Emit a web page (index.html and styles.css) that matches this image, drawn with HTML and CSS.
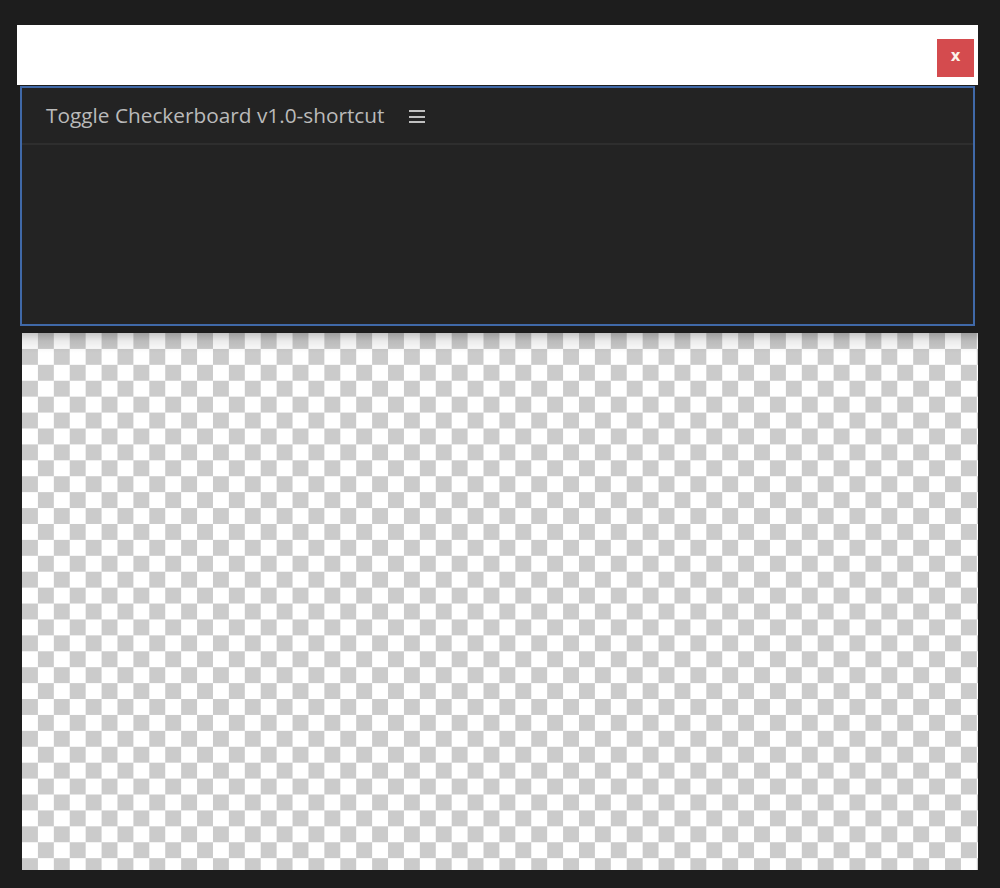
FILE: index.html
```html
<!DOCTYPE html>
<html lang="en">
<head>
<meta charset="utf-8">
<title>Toggle Checkerboard</title>
<link rel="stylesheet" href="styles.css">
</head>
<body>
<div class="screen">
  <div class="window">
    <div class="titlebar">
      <button class="close" type="button" aria-label="Close">x</button>
    </div>
    <section class="panel">
      <header class="panel-head">
        <span class="panel-title">Toggle Checkerboard v1.0-shortcut</span>
        <span class="menu" aria-hidden="true"><i></i><i></i><i></i></span>
      </header>
      <div class="panel-body"></div>
    </section>
    <div class="canvas"></div>
  </div>
</div>
</body>
</html>
```

FILE: styles.css
```css
html, body {
  margin: 0;
  padding: 0;
  background: #1b1b1b;
}

.screen {
  width: 1000px;
  height: 888px;
  box-sizing: border-box;
  padding: 25px 22px 18px 17px;
  background: #1d1d1d;
  font-family: "Open Sans", "Noto Sans", sans-serif;
}

.window {
  display: flex;
  flex-direction: column;
  height: 100%;
}

.titlebar {
  height: 60px;
  background: #ffffff;
  display: flex;
  justify-content: flex-end;
  align-items: flex-start;
  padding: 14px 4px 0 0;
  box-sizing: border-box;
  flex-shrink: 0;
}

.close {
  width: 37px;
  height: 38px;
  border: 0;
  padding: 0 0 3px 0;
  background: #d44b4e;
  color: #fbf3ea;
  font-family: "DejaVu Sans", sans-serif;
  font-size: 15px;
  font-weight: bold;
  line-height: 1;
  display: flex;
  align-items: center;
  justify-content: center;
}

.panel {
  margin: 1px 3px 0 3px;
  height: 240px;
  box-sizing: border-box;
  border: 2px solid #4069a8;
  background: #232323;
  display: flex;
  flex-direction: column;
  flex-shrink: 0;
}

.panel-head {
  height: 57px;
  box-sizing: border-box;
  border-bottom: 2px solid #2e2e2e;
  display: flex;
  align-items: center;
  padding: 0 0 1px 24px;
  gap: 25px;
}

.panel-title {
  color: #bababa;
  font-size: 20.8px;
  letter-spacing: 0;
}

.menu {
  display: flex;
  flex-direction: column;
  gap: 3.5px;
  width: 16px;
  padding-top: 3px;
}

.menu i {
  display: block;
  height: 2px;
  background: #c0c0c0;
}

.panel-body {
  flex: 1;
}

.canvas {
  flex: 1;
  margin: 7px 0 0 5px;
  background-color: #ffffff;
  background-image:
    linear-gradient(to bottom, rgba(0, 0, 0, 0.22), rgba(0, 0, 0, 0.08) 8px, rgba(0, 0, 0, 0) 20px),
    conic-gradient(#cbcbcb 0 25%, #ffffff 0 50%, #cbcbcb 0 75%, #ffffff 0);
  background-size: 100% 100%, 31.84px 31.84px;
  background-repeat: no-repeat, repeat;
  background-position: 0 0, 0 0;
}
```
